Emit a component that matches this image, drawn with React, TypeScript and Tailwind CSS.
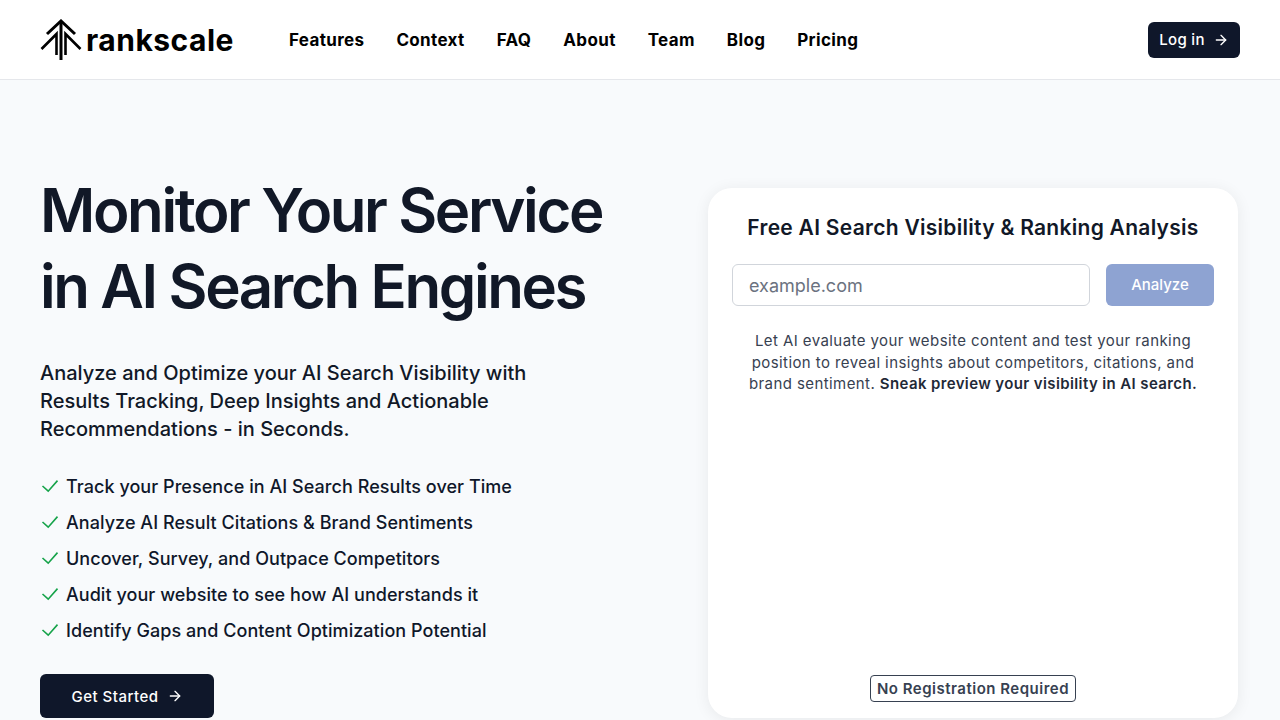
import { ArrowRight } from "lucide-react";

const nav = ["Features", "Context", "FAQ", "About", "Team", "Blog", "Pricing"];
const items = [
  "Track your Presence in AI Search Results over Time",
  "Analyze AI Result Citations & Brand Sentiments",
  "Uncover, Survey, and Outpace Competitors",
  "Audit your website to see how AI understands it",
  "Identify Gaps and Content Optimization Potential",
];

function Logo() {
  return (
    <svg width="42" height="42" viewBox="0 0 42 42" fill="none" stroke="#000" strokeWidth="3" className="shrink-0">
      <path d="M21 41V2" />
      <path d="M7 15 21 2l14 13" />
      <path d="M1.5 30 16.5 15v21" strokeWidth="2.6" />
      <path d="M40.5 30 25.5 15v21" strokeWidth="2.6" />
    </svg>
  );
}

function Tick() {
  return (
    <svg width="20" height="20" viewBox="0 0 20 20" fill="none" stroke="#16a34a" strokeWidth="1.6" className="shrink-0">
      <path d="M2.5 10 8.2 15.2 17.5 4.6" />
    </svg>
  );
}

export default function App() {
  return (
    <div className="h-screen overflow-hidden bg-[#f8fafc] font-['Inter',sans-serif] text-[#0f172a]">
      <header className="flex h-20 items-center border-b border-[#e5e7eb] bg-white px-10">
        <div className="flex w-[249px] shrink-0 items-center gap-1">
          <Logo />
          <span className="pt-0.5 text-[30px] font-bold tracking-[0.5px] text-black">rankscale</span>
        </div>
        <nav className="flex flex-1 items-center gap-8 pt-0.5 text-[17px] font-bold tracking-[0.35px] text-black">
          {nav.map((n) => (
            <span key={n}>{n}</span>
          ))}
        </nav>
        <button className="flex h-9 w-[92px] items-center justify-center gap-2 rounded-md bg-[#0f172a] text-[15px] font-medium tracking-[0.3px] text-white">
          <span className="pt-0.5">Log in</span>
          <ArrowRight size={16} />
        </button>
      </header>
      <main className="flex justify-between px-10">
        <section className="pt-[92px]">
          <h1 className="text-[60px] leading-[76px] font-semibold tracking-[-2.4px] text-[#111827]">
            Monitor Your Service
            <br />
            in AI Search Engines
          </h1>
          <p className="mt-[34px] w-[520px] pt-px text-[20px] leading-7 font-medium text-[#111827]">
            Analyze and Optimize your AI Search Visibility with Results Tracking, Deep Insights and Actionable Recommendations - in Seconds.
          </p>
          <ul className="mt-[25px]">
            {items.map((t) => (
              <li key={t} className="flex h-9 items-center gap-1.5 text-[18px] font-medium tracking-[0.05px]">
                <Tick />
                {t}
              </li>
            ))}
          </ul>
          <button className="mt-[26px] flex h-11 w-[174px] items-center justify-center gap-2 rounded-md bg-[#0f172a] text-[15px] font-medium tracking-[0.5px] text-white">
            <span className="pt-0.5">Get Started</span>
            <ArrowRight size={16} />
          </button>
        </section>
        <section className="mt-[108px] mr-[2px] flex h-[530px] w-[530px] flex-col items-center rounded-[24px] bg-white px-6 pt-6 pb-4 shadow-[0_2px_16px_rgba(0,0,0,0.07)]">
          <h2 className="pt-px text-[21px] leading-[30px] font-semibold tracking-[0.28px] text-[#111827]">Free AI Search Visibility &amp; Ranking Analysis</h2>
          <div className="mt-[21px] flex w-full gap-4">
            <input
              placeholder="example.com"
              className="h-[42px] flex-1 rounded-md border border-[#d1d5db] bg-white px-4 text-[18px] placeholder:text-[#6b7280]"
            />
            <button className="h-[42px] w-[108px] rounded-md bg-[#8ea3d2] text-[15px] font-medium text-white">Analyze</button>
          </div>
          <p className="mt-6 w-[466px] text-center text-[15px] leading-[21.5px] tracking-[0.42px] text-[#374151]">
            Let AI evaluate your website content and test your ranking position to reveal insights about competitors, citations, and brand sentiment.{" "}
            <strong className="font-semibold tracking-[0.38px] text-[#1f2937]">Sneak preview your visibility in AI search.</strong>
          </p>
          <span className="mt-auto flex h-[27px] items-center rounded border border-[#374151] px-1.5 pt-px text-[15px] font-semibold tracking-[0.5px] text-[#374151]">
            No Registration Required
          </span>
        </section>
      </main>
    </div>
  );
}
